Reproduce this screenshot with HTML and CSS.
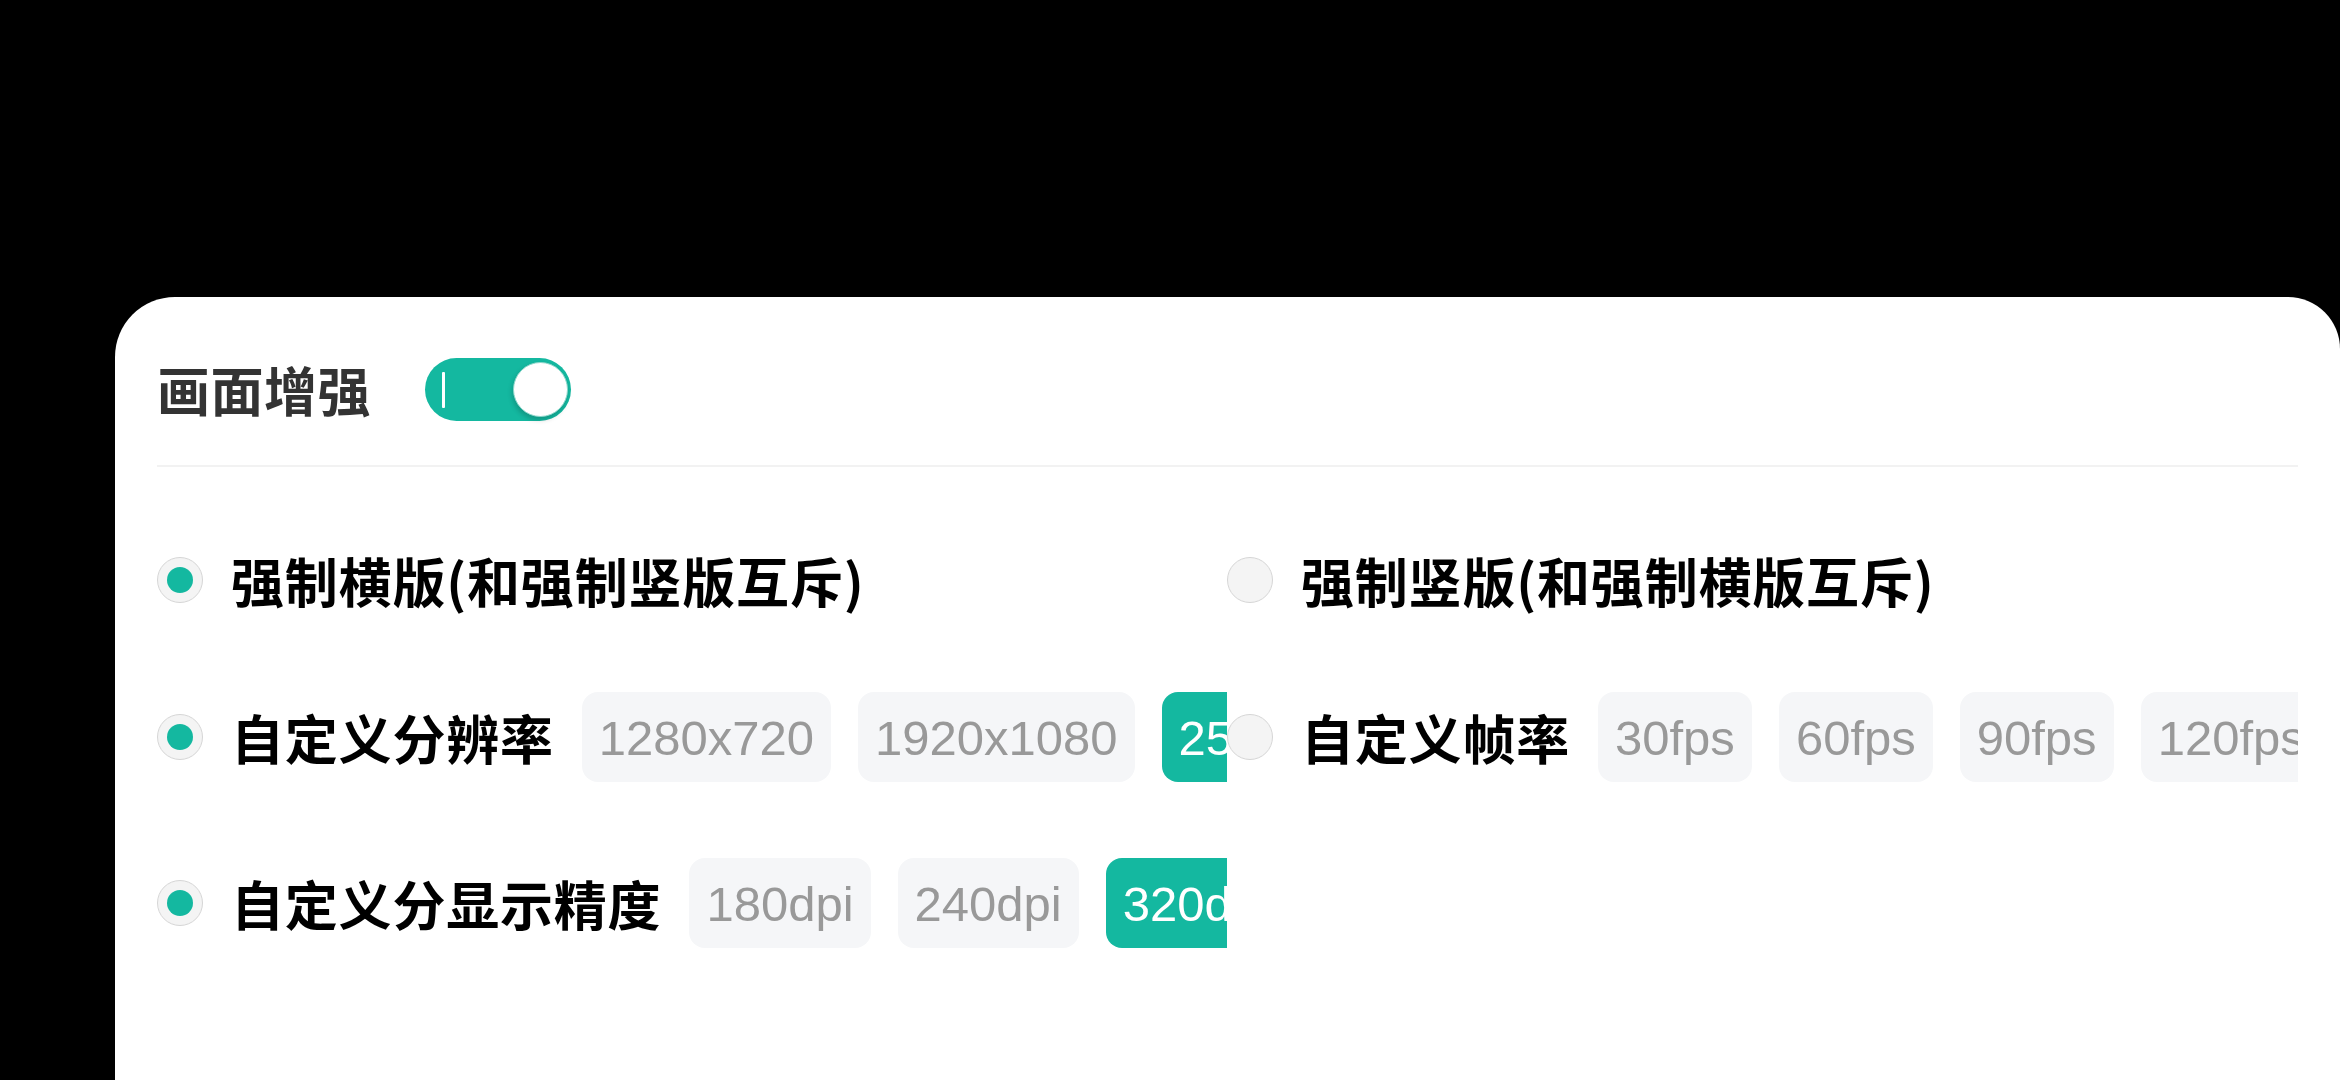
FILE: index.html
```html
<!DOCTYPE html>
<html lang="zh-CN">
<head>
<meta charset="utf-8">
<title>画面增强</title>
<link rel="stylesheet" href="styles.css">
</head>
<body>
<div class="card">
  <div class="header">
    <span class="title">画面增强</span>
    <span class="toggle"><span class="toggle-bar"></span><span class="knob"></span></span>
  </div>
  <div class="body">
    <div class="col">
      <span class="radio checked"></span>
      <span class="label">强制横版(和强制竖版互斥)</span>
    </div>
    <div class="col">
      <span class="radio"></span>
      <span class="label">强制竖版(和强制横版互斥)</span>
    </div>
    <div class="col">
      <span class="radio checked"></span>
      <span class="label">自定义分辨率</span>
      <span class="chip">1280x720</span>
      <span class="chip">1920x1080</span>
      <span class="chip active">2560x1440</span>
    </div>
    <div class="col">
      <span class="radio"></span>
      <span class="label">自定义帧率</span>
      <span class="chip">30fps</span>
      <span class="chip">60fps</span>
      <span class="chip">90fps</span>
      <span class="chip">120fps</span>
    </div>
    <div class="col spaced">
      <span class="radio checked"></span>
      <span class="label">自定义分显示精度</span>
      <span class="chip">180dpi</span>
      <span class="chip">240dpi</span>
      <span class="chip active">320dpi</span>
    </div>
    <div class="col spaced"></div>
  </div>
</div>
</body>
</html>
```

FILE: styles.css
```css
html, body {
  margin: 0;
  padding: 0;
  background: #000;
  height: 1080px;
  overflow: hidden;
}

body {
  padding-top: 297px;
  padding-left: 115px;
  box-sizing: border-box;
  font-family: "Noto Sans CJK SC", "Noto Sans", sans-serif;
}

.card {
  background: #fff;
  width: 2225px;
  height: 783px;
  border-radius: 60px 52px 0 0;
  box-sizing: border-box;
  padding: 0 42px;
}

.header {
  display: flex;
  align-items: center;
  gap: 54px;
  padding-top: 61px;
  padding-bottom: 44px;
  border-bottom: 2px solid #f2f2f2;
}

.title {
  font-size: 53px;
  font-weight: 700;
  color: #333;
  line-height: 63px;
  letter-spacing: 0.5px;
}

.toggle {
  display: flex;
  align-items: center;
  position: relative;
  width: 146px;
  height: 63px;
  border-radius: 32px;
  background: #14b8a0;
  box-sizing: border-box;
}

.toggle-bar {
  display: block;
  margin-left: 17px;
  width: 3px;
  height: 36px;
  background: #fff;
  border-radius: 1px;
}

.knob {
  position: absolute;
  right: 3px;
  top: 4px;
  width: 55px;
  height: 55px;
  border-radius: 50%;
  background: #fff;
  box-shadow: -1px 3px 5px rgba(0, 0, 0, 0.18);
  border: 1px solid #8fd8cc;
  box-sizing: border-box;
}

.body {
  display: grid;
  grid-template-columns: 1070px 1071px;
  row-gap: 67px;
  padding-top: 68px;
}

.col {
  display: flex;
  align-items: center;
  height: 90px;
  overflow: hidden;
  white-space: nowrap;
}

.col.spaced {
  margin-top: 9px;
}

.radio {
  flex: 0 0 auto;
  width: 46px;
  height: 46px;
  border-radius: 50%;
  background: #f4f4f4;
  border: 1.5px solid #d6d6d6;
  box-sizing: border-box;
  display: flex;
  align-items: center;
  justify-content: center;
  margin-right: 28px;
}

.radio.checked::after {
  content: "";
  width: 26px;
  height: 26px;
  border-radius: 50%;
  background: #14b8a0;
}

.label {
  flex: 0 0 auto;
  font-size: 53px;
  font-weight: 700;
  color: #000;
  line-height: 70px;
  letter-spacing: 0.8px;
  margin-right: 28px;
}

.chip {
  flex: 0 0 auto;
  height: 90px;
  line-height: 92px;
  padding: 0 17px;
  margin-right: 27px;
  border-radius: 16px;
  background: #f5f6f8;
  color: #999;
  font-family: "Liberation Sans", Arial, sans-serif;
  font-size: 49px;
}

.chip.active {
  background: #14b8a0;
  color: #fff;
}
```
